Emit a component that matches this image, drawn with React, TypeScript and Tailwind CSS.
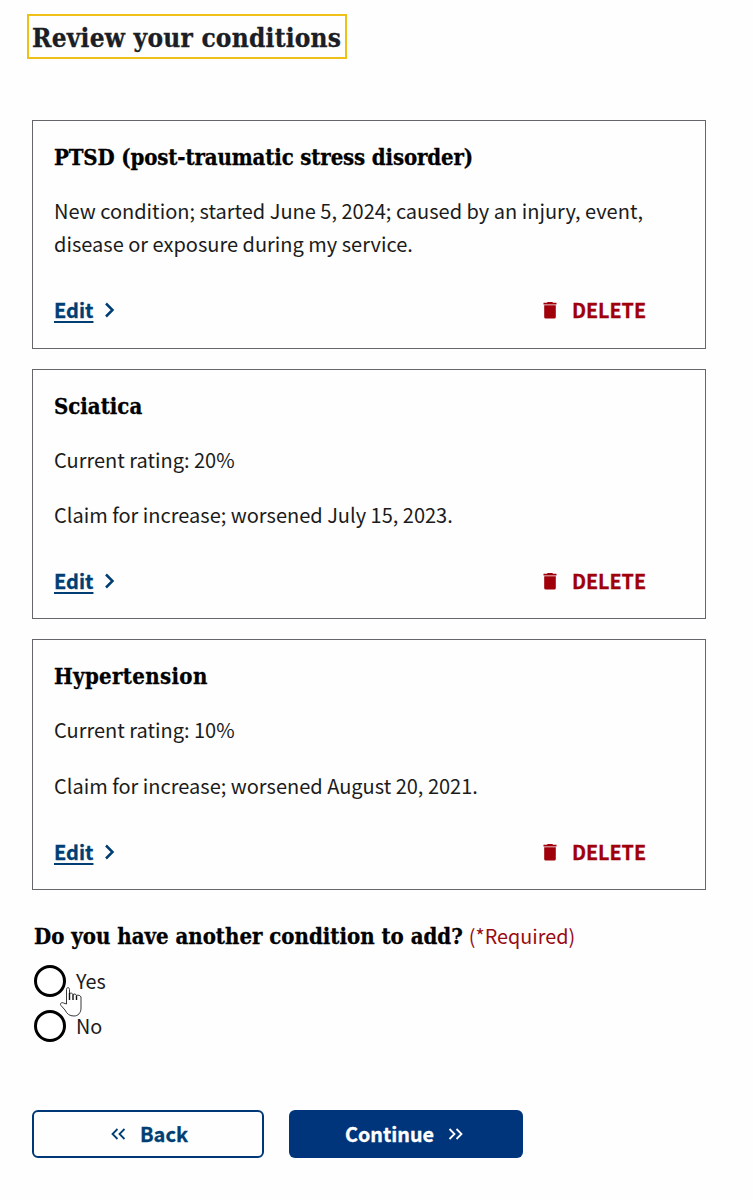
import React from "react";

type Condition = { title: string; titleClass: string; paragraphs: string[][]; gap: string; height: string };

const conditions: Condition[] = [
  {
    title: "PTSD (post-traumatic stress disorder)",
    titleClass: "tracking-[-0.13px]",
    paragraphs: [["New condition; started June 5, 2024; caused by an injury, event,", "disease or exposure during my service."]],
    gap: "gap-[22px]",
    height: "h-[229px]",
  },
  {
    title: "Sciatica",
    titleClass: "",
    paragraphs: [["Current rating: 20%"], ["Claim for increase; worsened July 15, 2023."]],
    gap: "gap-[22px]",
    height: "h-[250px]",
  },
  {
    title: "Hypertension",
    titleClass: "tracking-[0.35px]",
    paragraphs: [["Current rating: 10%"], ["Claim for increase; worsened August 20, 2021."]],
    gap: "gap-[23px]",
    height: "h-[251px]",
  },
];

const slab = "font-['DejaVu_Serif_Condensed','DejaVu_Serif',serif] font-bold [font-stretch:condensed] [-webkit-text-stroke:0.3px_currentColor]";

function TrashIcon() {
  return (
    <svg width="14" height="18" viewBox="0 0 14 18" fill="currentColor" aria-hidden="true">
      <path d="M.5 1.800h3.300l1-.900h4.400l1 .9h3.300v1.700H.5zM1.200 4.300h11.600v11.700a1.600 1.600 0 0 1-1.600 1.600H2.800A1.600 1.600 0 0 1 1.200 16z" />
    </svg>
  );
}

function ConditionCard({ condition }: { condition: Condition }) {
  return (
    <section className={`w-[674px] border border-[#65666a] pl-[21px] pt-[22px] ${condition.height}`}>
      <h2 className={`${slab} text-[22px] leading-[28px] whitespace-nowrap text-black ${condition.titleClass}`}>{condition.title}</h2>
      <div className={`mt-[23px] flex flex-col text-[20px] leading-[33px] text-[#1b1b1b] ${condition.gap}`}>
        {condition.paragraphs.map((lines) => (
          <p key={lines[0]} className="whitespace-nowrap">
            {lines.map((line) => (
              <span key={line} className="block">{line}</span>
            ))}
          </p>
        ))}
      </div>
      <div className="mt-[35px] flex h-[30px] items-center justify-between pr-[59px] text-[20px] leading-[30px] font-bold">
        <a href="#edit" className="flex items-center text-[#003e73]">
          <span className="underline decoration-[1.5px] underline-offset-[3px] [-webkit-text-stroke:0.3px_currentColor]">Edit</span>
          <svg className="ml-[11px]" width="11" height="16" viewBox="0 0 11 16" fill="none" stroke="currentColor" strokeWidth="2.5" aria-hidden="true">
            <path d="M2 1.500 8.500 8 2 14.500" />
          </svg>
        </a>
        <button className="flex items-center gap-[15px] text-[#a00009]">
          <TrashIcon />
          <span className="text-[19.7px] [-webkit-text-stroke:0.3px_currentColor]">DELETE</span>
        </button>
      </div>
    </section>
  );
}

function HandCursor() {
  return (
    <svg className="absolute top-[34px] left-[25px]" width="24" height="32" viewBox="0 0 24 32" aria-hidden="true">
      <path
        d="M7.500 18V3.500C7.500 1 10.500 1 10.500 3.500V8c1-1.500 3-1 3.500 .7 1-1.200 3-.8 3.500 .8 1.500-.9 4 0 4.500 1.500V22c0 5-3 8-7 8-4.500 0-7-2-9-6l-4-4.500c-1.500-2 .5-3.500 2.500-2.500z"
        fill="white"
        stroke="#222"
        strokeWidth="0.9"
      />
      <path d="M10.500 7v7M14 8.500V14M17.500 9.500V14" stroke="#111" strokeWidth="1.4" />
    </svg>
  );
}

export default function App() {
  return (
    <main className="h-[1200px] w-[753px] overflow-hidden bg-[#fefefe] pt-[14px] pl-[32px] font-['Noto_Sans_CJK_SC',sans-serif]">
      <h1 className={`${slab} -ml-[5px] h-[45px] w-[320px] border-[2.500px] border-[#efc018] pl-[3px] text-[26px] leading-[44px] tracking-[0.23px] whitespace-nowrap text-[#1b1e26]`}>
        Review your conditions
      </h1>
      <div className="mt-[61px] flex flex-col gap-[20px]">
        {conditions.map((c) => (
          <ConditionCard key={c.title} condition={c} />
        ))}
      </div>
      <fieldset className="relative mt-[30px] ml-[2px] h-[125px]">
        <legend className="flex h-[32px] items-center whitespace-nowrap">
          <span className={`${slab} text-[22px] leading-[32px] text-black`}>Do you have another condition to add?</span>
          <span className="ml-[6px] text-[19.8px] leading-[32px] text-[#980b12]">(*Required)</span>
        </legend>
        <div className="mt-[13px] flex flex-col gap-[13px] text-[19.8px] leading-[32px] text-[#1b1b1b]">
          {["Yes", "No"].map((option) => (
            <label key={option} className="flex h-[32px] items-center gap-[10px]">
              <input type="radio" name="another-condition" className="size-[32px] appearance-none rounded-full border-3 border-black bg-white" />
              <span>{option}</span>
            </label>
          ))}
        </div>
        <HandCursor />
      </fieldset>
      <div className="mt-[65px] flex gap-[25px] text-[20px] font-bold">
        <button className="flex h-[48px] w-[232px] items-center justify-center gap-[14px] rounded-[6px] border-[2.500px] border-[#003877] pl-[3px] text-[#003e73]">
          <svg width="15" height="12" viewBox="0 0 15 12" fill="none" stroke="currentColor" strokeWidth="1.8" aria-hidden="true">
            <path d="M6.500 1 1.500 6l5 5M13.500 1l-5 5 5 5" />
          </svg>
          <span className="[-webkit-text-stroke:0.3px_currentColor]">Back</span>
        </button>
        <button className="flex h-[48px] w-[234px] items-center justify-center gap-[14px] rounded-[6px] bg-[#00357c] pr-[4px] text-white">
          <span className="text-[19.8px] [-webkit-text-stroke:0.3px_currentColor]">Continue</span>
          <svg width="15" height="12" viewBox="0 0 15 12" fill="none" stroke="currentColor" strokeWidth="1.8" aria-hidden="true">
            <path d="m1.500 1 5 5-5 5M8.500 1l5 5-5 5" />
          </svg>
        </button>
      </div>
    </main>
  );
}
